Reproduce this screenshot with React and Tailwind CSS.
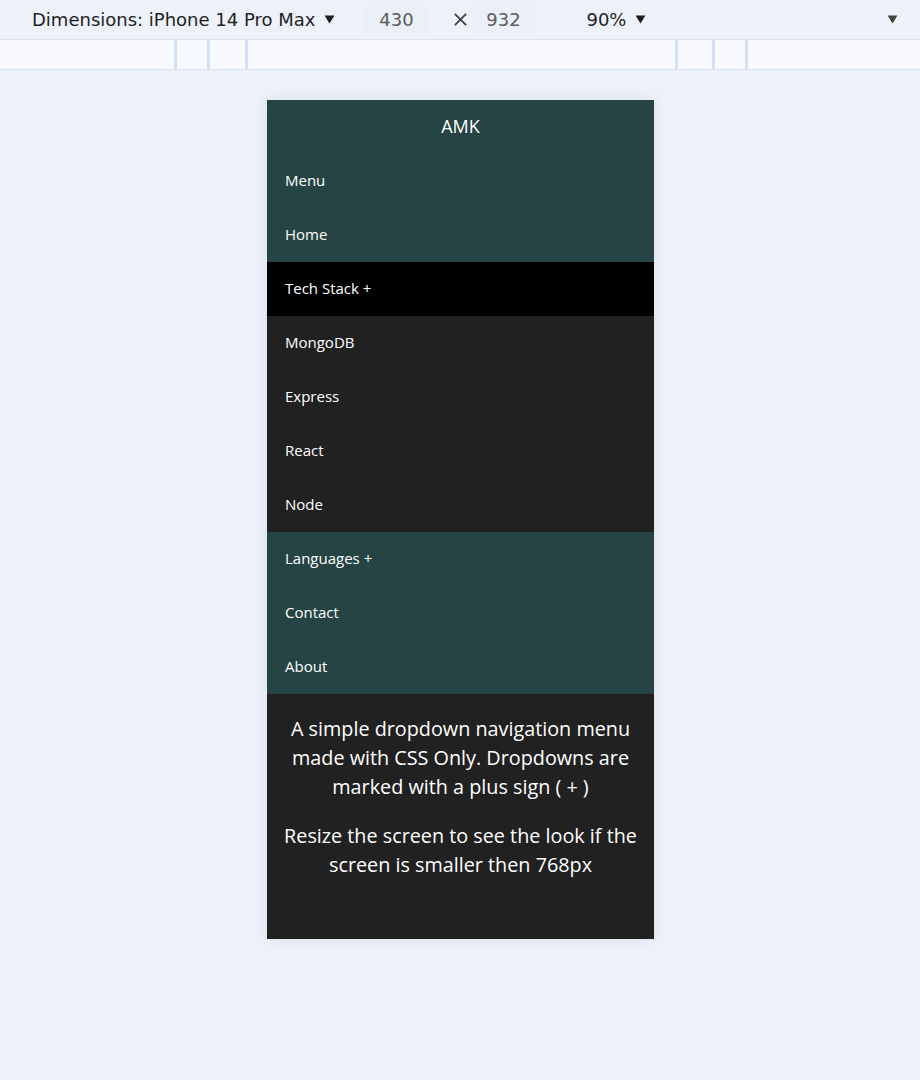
import React from "react";

const topItems = ["Menu", "Home"];
const techStack = ["MongoDB", "Express", "React", "Node"];
const bottomItems = ["Languages +", "Contact", "About"];

const Caret = ({ className = "" }) => (
  <svg viewBox="0 0 12 10" className={className} fill="currentColor">
    <path d="M0.5 0.5 H11.5 L6 9.5 Z" />
  </svg>
);

const NavRow = ({ label, bg }) => (
  <li className={`flex h-[54px] items-center px-[18px] pb-[2px] text-[15px] text-white ${bg}`}>
    {label}
  </li>
);

export default function App() {
  return (
    <div className="min-h-[1080px] bg-[#edf1f9]">
      {/* device toolbar */}
      <div
        className="flex h-[40px] items-center border-b border-[#d6e2f6] text-[18px] text-[#1f1f1f]"
        style={{ fontFamily: "'DejaVu Sans', sans-serif" }}
      >
        <div className="ml-[32px] flex items-center">
          <span>Dimensions: iPhone 14 Pro Max</span>
          <Caret className="ml-[9px] h-[9px] w-[11px] text-[#1f1f1f]" />
        </div>
        <div className="ml-[30px] flex h-[30px] w-[62px] items-center justify-center bg-[#ebf0f8] text-[#5c5c5c]">
          430
        </div>
        <svg viewBox="0 0 16 16" className="ml-[26px] h-[15px] w-[15px] text-[#3c3c3c]" stroke="currentColor" strokeWidth="1.8">
          <path d="M2 2 L14 14 M14 2 L2 14" />
        </svg>
        <div className="ml-[4px] flex h-[30px] w-[62px] items-center justify-center bg-[#ebf0f8] text-[#5c5c5c]">
          932
        </div>
        <div className="ml-[52px] flex items-center">
          <span>90%</span>
          <Caret className="ml-[9px] h-[9px] w-[11px] text-[#1f1f1f]" />
        </div>
        <Caret className="ml-auto mr-[22px] h-[9px] w-[11px] text-[#444]" />
      </div>

      {/* ruler strip */}
      <div className="flex h-[30px] border-b border-[#d6e2f6] bg-[#f8faff]">
        <div className="w-[174px]" />
        <div className="w-[3px] bg-[#d3e1f8]" />
        <div className="w-[30px]" />
        <div className="w-[3px] bg-[#d3e1f8]" />
        <div className="w-[35px]" />
        <div className="w-[3px] bg-[#d3e1f8]" />
        <div className="w-[427px]" />
        <div className="w-[3px] bg-[#d3e1f8]" />
        <div className="w-[34px]" />
        <div className="w-[3px] bg-[#d3e1f8]" />
        <div className="w-[30px]" />
        <div className="w-[3px] bg-[#d3e1f8]" />
      </div>

      {/* phone viewport */}
      <div className="flex justify-center pt-[30px]">
        <div
          className="ml-[1px] flex h-[839px] w-[387px] flex-col bg-[#212121] shadow-[0_0_12px_rgba(120,140,180,0.18)]"
          style={{ fontFamily: "'Open Sans', sans-serif" }}
        >
          <div className="flex h-[54px] items-center justify-center bg-[#264444] pb-[1px] text-[18px] text-white">
            AMK
          </div>
          <ul>
            {topItems.map((item) => (
              <NavRow key={item} label={item} bg="bg-[#264444]" />
            ))}
            <NavRow label="Tech Stack +" bg="bg-black" />
            {techStack.map((item) => (
              <NavRow key={item} label={item} bg="bg-[#212121]" />
            ))}
            {bottomItems.map((item) => (
              <NavRow key={item} label={item} bg="bg-[#264444]" />
            ))}
          </ul>
          <div className="px-[14px] pt-[20px] text-center text-[19.8px] leading-[29px] text-white">
            <p>
              A simple dropdown navigation menu made with CSS Only. Dropdowns are marked with a plus sign ( + )
            </p>
            <p className="mt-[20px]">
              Resize the screen to see the look if the screen is smaller then 768px
            </p>
          </div>
        </div>
      </div>
    </div>
  );
}
